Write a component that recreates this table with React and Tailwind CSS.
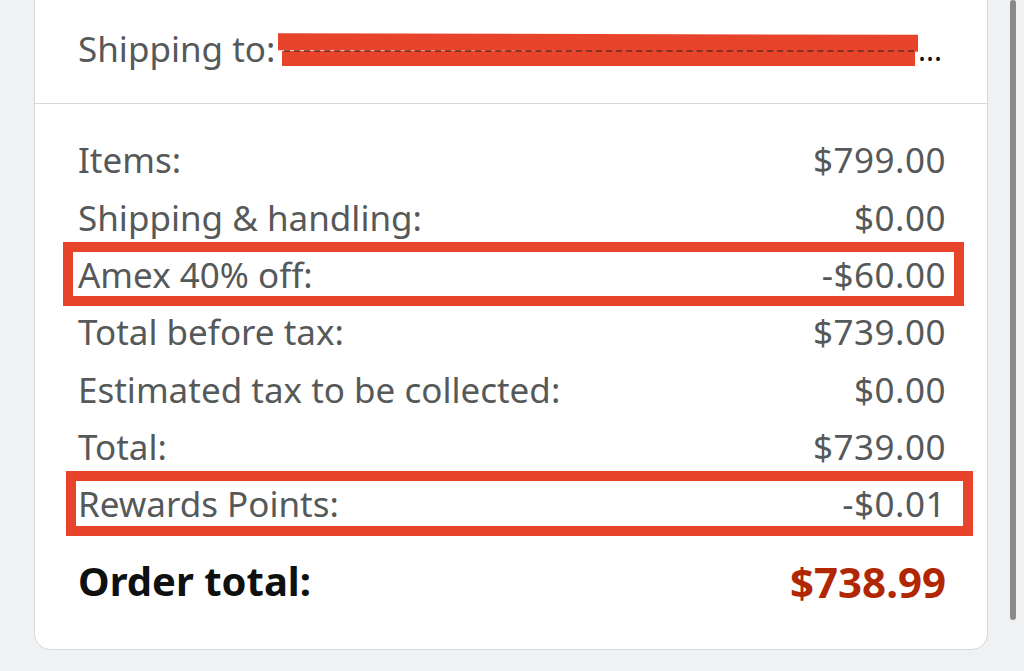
const rows = [
  { label: 'Items:', value: '$799.00' },
  { label: 'Shipping & handling:', value: '$0.00' },
  { label: 'Amex 40% off:', value: '-$60.00', mark: 'amex' },
  { label: 'Total before tax:', value: '$739.00' },
  { label: 'Estimated tax to be collected:', value: '$0.00' },
  { label: 'Total:', value: '$739.00' },
  { label: 'Rewards Points:', value: '-$0.01', mark: 'rewards' },
];

// hand-drawn red annotation boxes from the screenshot
function Mark({ kind }) {
  if (kind === 'amex') {
    return (
      <div className="pointer-events-none absolute left-[-15px] right-[-18px] top-[-5px] bottom-[-2px] border-[10px] border-[#e8432b]" />
    );
  }
  return (
    <div className="pointer-events-none absolute left-[-12px] right-[-27px] top-[-5px] bottom-[-3px] border-[10px] border-[#e8432b]" />
  );
}

export default function App() {
  return (
    <div
      className="flex h-[671px] overflow-hidden bg-[#eff1f2]"
      style={{ fontFamily: '"Noto Sans", "Open Sans", sans-serif' }}
    >
      <div className="ml-[34px] -mt-4 h-[666px] w-[954px] rounded-2xl border border-[#d5d9d9] bg-white">
        <div className="flex h-[119px] items-center border-b border-[#d5d9d9] pl-[43px] pr-[45px] pt-[10px]">
          <div className="relative flex h-[50px] w-full items-center text-[35px] text-[#565959]">
            <span className="whitespace-nowrap">Shipping to:</span>
            <span className="ml-auto text-[30px] text-[#0f1111]">...</span>
            {/* redacted name / address scribble */}
            <div className="absolute left-[200px] top-[10px] h-[17px] w-[640px] rotate-[0.15deg] bg-[#e8432b]" />
            <div className="absolute left-[204px] top-[27px] h-[15px] w-[633px] bg-[#e8432b]" />
            <div className="absolute left-[206px] top-[26px] w-[630px] border-t-2 border-dashed border-[#5a2a1e]/70" />
          </div>
        </div>

        <div className="pl-[43px] pr-[41px] pt-[28px]">
          {rows.map((r) => (
            <div key={r.label} className="relative flex h-[57.33px] items-center justify-between text-[35px] text-[#565959]">
              {r.mark && <Mark kind={r.mark} />}
              <span>{r.label}</span>
              <span className="tracking-[0.5px]">{r.value}</span>
            </div>
          ))}
          <div className="mt-[18px] flex h-[60px] items-center justify-between font-bold">
            <span className="text-[40px] text-[#0f1111]">Order total:</span>
            <span className="text-[42px] text-[#b12704]">$738.99</span>
          </div>
        </div>
      </div>
      <div className="ml-[22px] h-[620px] w-[6px] rounded-full bg-[#8a8a8a]" />
    </div>
  );
}
